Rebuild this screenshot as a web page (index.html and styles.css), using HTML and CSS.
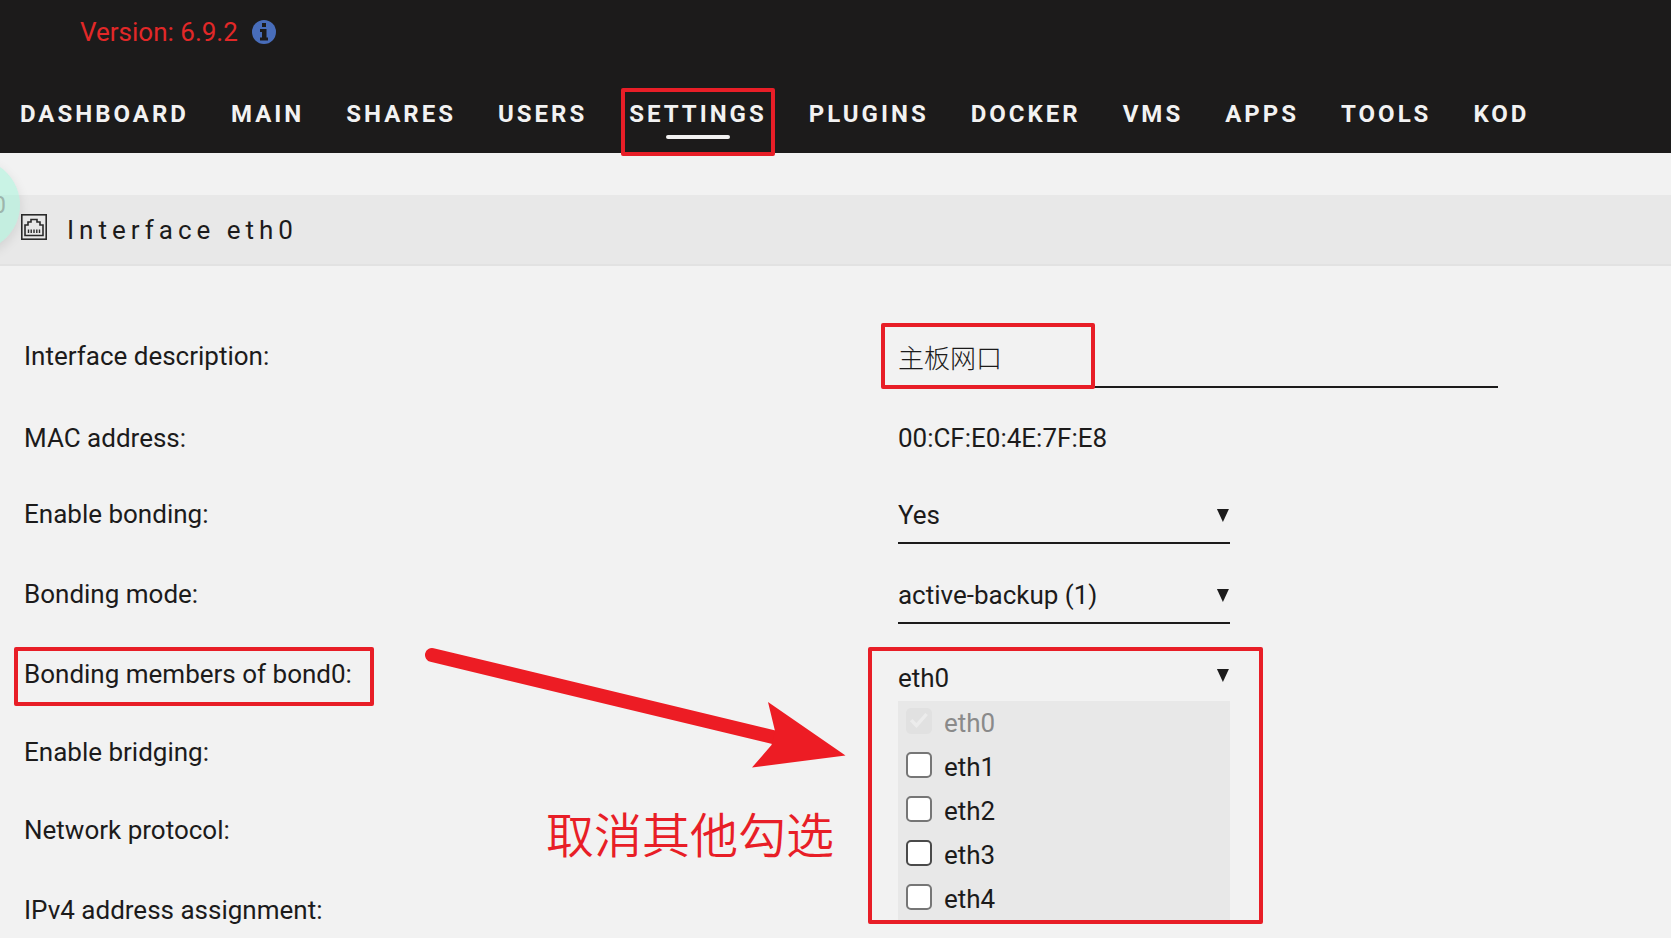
FILE: index.html
```html
<!DOCTYPE html>
<html lang="en">
<head>
<meta charset="utf-8">
<title>Network Settings</title>
<link rel="stylesheet" href="styles.css">
</head>
<body>
<header class="header">
  <div class="version">
    <span>Version: 6.9.2</span>
    <svg class="info-icon" viewBox="0 0 24 24" aria-hidden="true">
      <circle cx="12" cy="12" r="12" fill="#486dba"/>
      <path fill="#1c1b1b" d="M10 3h4v4h-4zM8 9h6.5v8.500H16v3H8v-3h2v-5.500H8z"/>
    </svg>
  </div>
  <nav class="nav">
    <a href="#">DASHBOARD</a>
    <a href="#">MAIN</a>
    <a href="#">SHARES</a>
    <a href="#">USERS</a>
    <a href="#" class="active">SETTINGS</a>
    <a href="#">PLUGINS</a>
    <a href="#">DOCKER</a>
    <a href="#">VMS</a>
    <a href="#">APPS</a>
    <a href="#">TOOLS</a>
    <a href="#">KOD</a>
  </nav>
</header>
<main class="main">
  <div class="title-bar">
    <div class="bubble"><span>0</span></div>
    <svg class="port-icon" viewBox="0 0 26 26" fill="none" stroke="#2a2a2a" aria-hidden="true">
      <rect x="0.800" y="0.800" width="24.400" height="24.400" stroke-width="1.600"/>
      <path stroke-width="1.600" d="M4 21.500V11h3V8h3V5.500h6V8h3v3h3v10.500z"/>
      <path stroke-width="1.400" d="M7.500 15.500v3.500M10.200 15.500v3.500M13 15.500v3.500M15.800 15.500v3.500M18.500 15.500v3.500"/>
    </svg>
    <h1 class="title">Interface eth0</h1>
  </div>
  <form class="form">
    <div class="row row-tall">
      <label for="desc">Interface description:</label>
      <div class="value mark mark-desc"><input id="desc" class="text" type="text" value="主板网口"></div>
    </div>
    <div class="row row-plain">
      <span>MAC address:</span>
      <span>00:CF:E0:4E:7F:E8</span>
    </div>
    <div class="row">
      <label for="bonding">Enable bonding:</label>
      <div class="value drop"><select id="bonding" class="select"><option>Yes</option><option>No</option></select></div>
    </div>
    <div class="row">
      <label for="mode">Bonding mode:</label>
      <div class="value drop"><select id="mode" class="select"><option>active-backup (1)</option></select></div>
    </div>
    <div class="row mark mark-label">
      <span id="members">Bonding members of bond0:</span>
      <div class="value drop mark mark-members">
        <button type="button" class="select picker" aria-labelledby="members">eth0</button>
        <div class="menu">
          <label class="item disabled"><input type="checkbox" checked disabled>eth0</label>
          <label class="item"><input type="checkbox">eth1</label>
          <label class="item"><input type="checkbox">eth2</label>
          <label class="item focus"><input type="checkbox">eth3</label>
          <label class="item"><input type="checkbox">eth4</label>
        </div>
      </div>
      <svg class="arrow" viewBox="0 0 424 120" aria-hidden="true">
        <path d="M11 11L356 94" stroke="#ed1c24" stroke-width="14" stroke-linecap="round"/>
        <path d="M347 58L424.500 111.500L331 123.500L350.500 101L354 87z" fill="#ed1c24"/>
      </svg>
      <div class="note">取消其他勾选</div>
    </div>
    <div class="row row-mid"><span>Enable bridging:</span></div>
    <div class="row"><span>Network protocol:</span></div>
    <div class="row"><span>IPv4 address assignment:</span></div>
  </form>
</main>
</body>
</html>
```
FILE: styles.css
```css
*, *::before, *::after { box-sizing: border-box; }

body {
  margin: 0;
  height: 100vh;
  overflow: hidden;
  background: #f2f2f2;
  color: #1c1b1b;
  font: 26px/36px Roboto, "Noto Sans CJK SC", sans-serif;
}

.header {
  height: 153px;
  background: #1c1b1b;
}

.version {
  display: flex;
  align-items: center;
  gap: 14px;
  padding: 14px 0 0 80px;
  color: #e22828;
}

.info-icon { width: 24px; height: 24px; }

.nav {
  display: flex;
  gap: 42px;
  padding: 46px 0 0 20px;
}

.nav a {
  position: relative;
  color: #f2f2f2;
  font-size: 24px;
  font-weight: 700;
  letter-spacing: 3px;
  text-decoration: none;
}

.nav .active::before {
  content: "";
  position: absolute;
  left: 50%;
  bottom: -7px;
  width: 64px;
  height: 4px;
  margin-left: -32px;
  border-radius: 2px;
  background: #f2f2f2;
}

.nav .active::after,
.mark::after {
  content: "";
  position: absolute;
  border: 4px solid #e81e27;
  border-radius: 2px;
  pointer-events: none;
}

.nav .active::after { inset: -8px -8px -24px -8px; }

.title-bar {
  position: relative;
  display: flex;
  align-items: center;
  gap: 20px;
  margin-top: 42px;
  height: 71px;
  padding-left: 21px;
  border-bottom: 2px solid #e2e2e2;
  background: #e8e8e8;
}

.port-icon { width: 26px; height: 26px; margin-bottom: 6px; }

.title {
  margin: 0;
  font-size: 26px;
  font-weight: 400;
  letter-spacing: 5px;
}

.bubble {
  position: absolute;
  left: -72px;
  top: -36px;
  width: 92px;
  height: 92px;
  padding: 28px 14px;
  border-radius: 50%;
  background: rgba(160, 244, 216, 0.5);
  box-shadow: 0 4px 12px rgba(0, 0, 0, 0.1);
  color: #9db5ac;
  font-size: 24px;
  text-align: right;
}

.form { padding: 44px 0 0 24px; }

.row {
  position: relative;
  display: grid;
  grid-template-columns: 53% 1fr;
  column-gap: 1px;
  align-items: center;
  height: 80px;
}

.row-tall { height: 92px; }
.row-plain { height: 72px; }
.row-mid { height: 76px; }

.value { position: relative; }

.text, .select {
  display: block;
  margin: 0;
  padding: 0;
  border: 0;
  border-bottom: 2px solid #1c1b1b;
  border-radius: 0;
  outline: 0;
  background: none;
  color: inherit;
  font: inherit;
  text-align: left;
  appearance: none;
}

.text { width: 600px; height: 64px; padding-top: 2px; font-weight: 300; }
.select { width: 100%; height: 60px; padding-top: 4px; }

.drop { width: 332px; }

.drop::before {
  content: "";
  position: absolute;
  right: 1px;
  top: 25px;
  width: 12px;
  height: 13px;
  background: #1c1b1b;
  clip-path: polygon(0 0, 100% 0, 50% 100%);
}

.picker { padding-top: 10px; border-bottom-color: transparent; }

.mark-desc::after { left: -17px; top: -1px; width: 214px; height: 66px; }
.mark-label::after { left: -10px; top: 13px; width: 360px; height: 59px; }
.mark-members::after { inset: 3px -33px -220px -30px; }

.menu {
  position: absolute;
  left: 0;
  right: 0;
  top: 57px;
  height: 220px;
  padding: 0 8px;
  background: #e8e8e8;
}

.item {
  display: flex;
  align-items: center;
  gap: 12px;
  height: 44px;
}

.item input {
  appearance: none;
  width: 26px;
  height: 26px;
  margin: 0 0 5px;
  border: 2px solid #767676;
  border-radius: 5px;
  background: #fff;
}

.item.focus input { border-color: #4a4a4a; }
.item.disabled { color: #8a8a8a; }

.item.disabled input {
  display: grid;
  place-items: center;
  border: 0;
  background: #e1e1e1;
}

.item.disabled input::before {
  content: "";
  width: 18px;
  height: 15px;
  background: #ececec;
  clip-path: polygon(0 55%, 14% 40%, 36% 66%, 86% 0, 100% 14%, 37% 100%);
}

.arrow {
  position: absolute;
  left: 397px;
  top: 10px;
  width: 424px;
  height: 120px;
  overflow: visible;
}

.note {
  position: absolute;
  left: 522px;
  top: 167px;
  color: #e81e27;
  font-size: 48px;
  font-weight: 350;
  line-height: 72px;
  white-space: nowrap;
}
```
